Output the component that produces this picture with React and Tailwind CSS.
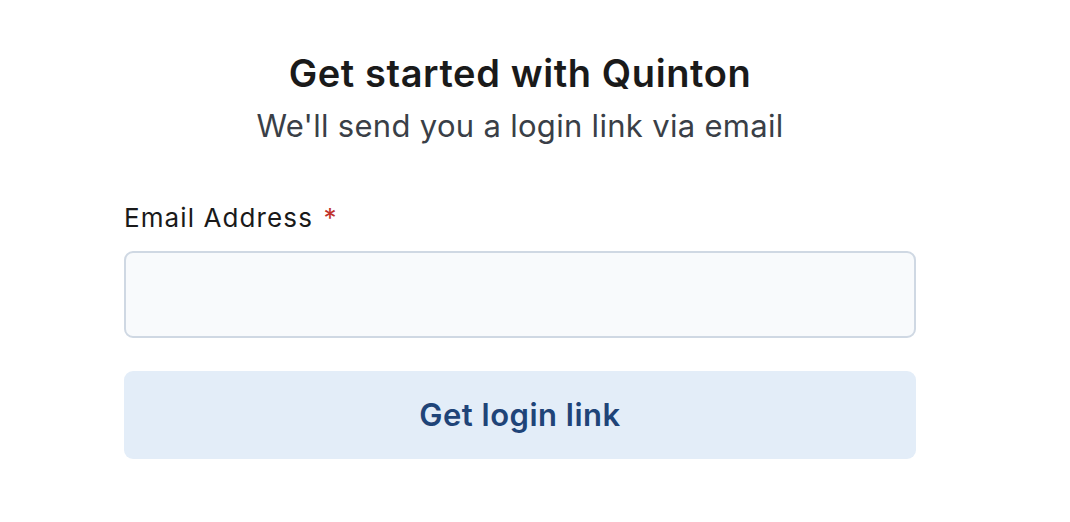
export default function App() {
  return (
    <div className="min-h-screen bg-white font-['Inter',sans-serif] text-[#1a1a1a]">
      <div className="ml-[124px] w-[792px] pt-[52px]">
        <div className="text-center">
          <h1 className="text-[38px] font-semibold leading-[42px] tracking-[0.6px]">Get started with Quinton</h1>
          <p className="mt-[14px] text-[31px] leading-[36px] tracking-[0.3px] text-[#3a3f47]">
            We'll send you a login link via email
          </p>
        </div>
        <form className="mt-[59px]" onSubmit={(e) => e.preventDefault()}>
          <label className="block text-[26px] leading-[30px] tracking-[1.1px]">
            Email Address <span className="ml-[2px] text-[#c0312b]">*</span>
          </label>
          <input
            type="email"
            className="mt-[18px] block h-[87px] w-full rounded-[9px] border-2 border-[#cfd8e3] bg-[#f8fafc] px-4 text-[22px] outline-none"
          />
          <button
            type="submit"
            className="mt-[33px] flex h-[88px] w-full items-center justify-center rounded-[9px] bg-[#e3edf8] text-[31px] font-semibold tracking-[0.5px] text-[#1f4478]"
          >
            Get login link
          </button>
        </form>
      </div>
    </div>
  );
}
